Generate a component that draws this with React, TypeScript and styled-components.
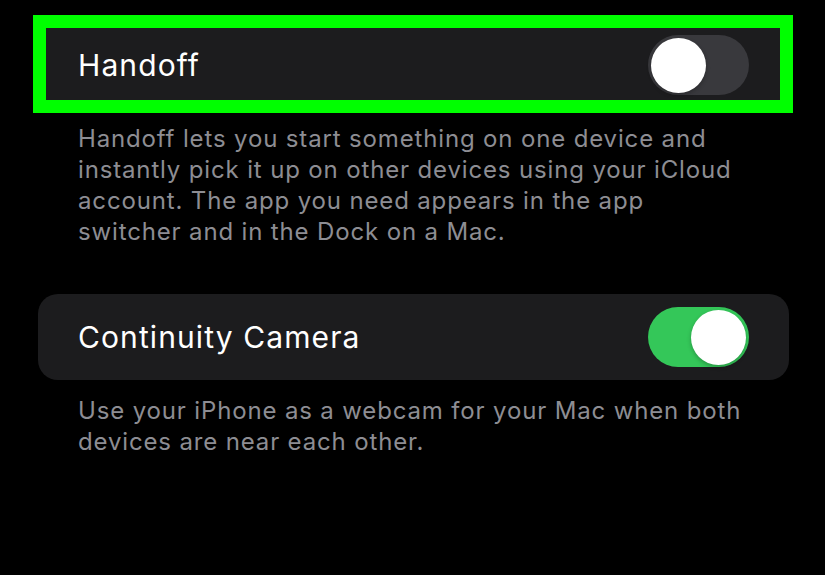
import React from "react";
import styled, { createGlobalStyle } from "styled-components";

const Global = createGlobalStyle`
  html, body { margin: 0; padding: 0; background: #000; }
  body { font-family: Inter, "Noto Sans", sans-serif; -webkit-font-smoothing: antialiased; }
`;

const Page = styled.div`
  width: 825px;
  height: 575px;
  background: #000;
  padding: 22px 36px 0 38px;
  box-sizing: border-box;
  display: flex;
  flex-direction: column;
`;

const Section = styled.section<{ $gap: number }>`
  display: flex;
  flex-direction: column;
  margin-bottom: ${(p) => p.$gap}px;
`;

const Card = styled.div`
  position: relative;
  height: 86px;
  background: #1c1c1e;
  border-radius: 20px;
  display: flex;
  align-items: center;
  justify-content: space-between;
  padding: 0 40px 0 40px;
  box-sizing: border-box;
`;

const Highlight = styled.div`
  position: absolute;
  left: -5px;
  right: -4px;
  top: -7px;
  bottom: -5px;
  border: 13px solid #00ff00;
  pointer-events: none;
`;

const Label = styled.span`
  color: #fff;
  font-size: 30px;
  font-weight: 400;
  letter-spacing: 1.1px;
`;

const Track = styled.div<{ $on: boolean }>`
  width: 101px;
  height: 60px;
  border-radius: 30px;
  background: ${(p) => (p.$on ? "#34c759" : "#39393d")};
  display: flex;
  align-items: center;
  justify-content: ${(p) => (p.$on ? "flex-end" : "flex-start")};
  padding: 0 3px;
  box-sizing: border-box;
`;

const Knob = styled.div`
  width: 55px;
  height: 55px;
  border-radius: 50%;
  background: #fff;
  box-shadow: 0 2px 4px rgba(0, 0, 0, 0.25);
`;

const Footer = styled.p`
  margin: 0;
  padding: 15px 40px 0 40px;
  color: #8d8d93;
  font-size: 24px;
  line-height: 31px;
  letter-spacing: 0.85px;
`;

const Toggle = ({ on }: { on: boolean }) => (
  <Track $on={on}>
    <Knob />
  </Track>
);

export default function App() {
  return (
    <>
      <Global />
      <Page>
        <Section $gap={47}>
          <Card>
            <Label>Handoff</Label>
            <Toggle on={false} />
            <Highlight />
          </Card>
          <Footer>
            Handoff lets you start something on one device and instantly pick it up on other devices using your iCloud account. The app you need appears in the app switcher and in the Dock on a Mac.
          </Footer>
        </Section>
        <Section $gap={0}>
          <Card>
            <Label>Continuity Camera</Label>
            <Toggle on={true} />
          </Card>
          <Footer>
            Use your iPhone as a webcam for your Mac when both devices are near each other.
          </Footer>
        </Section>
      </Page>
    </>
  );
}
